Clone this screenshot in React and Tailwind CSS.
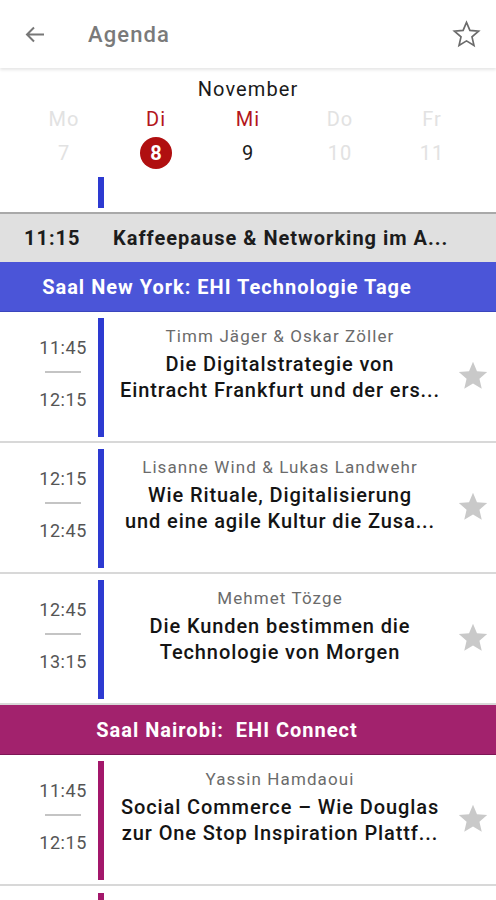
const BLUE_BAR = "bg-[#2d3ad1]";
const PURPLE_BAR = "bg-[#a3176b]";

const sessions = [
  {
    from: "11:45",
    to: "12:15",
    speaker: "Timm Jäger & Oskar Zöller",
    lines: ["Die Digitalstrategie von", "Eintracht Frankfurt und der ers..."],
    bar: BLUE_BAR,
  },
  {
    from: "12:15",
    to: "12:45",
    speaker: "Lisanne Wind & Lukas Landwehr",
    lines: ["Wie Rituale, Digitalisierung", "und eine agile Kultur die Zusa..."],
    bar: BLUE_BAR,
  },
  {
    from: "12:45",
    to: "13:15",
    speaker: "Mehmet Tözge",
    lines: ["Die Kunden bestimmen die", "Technologie von Morgen"],
    bar: BLUE_BAR,
  },
];

const nairobi = [
  {
    from: "11:45",
    to: "12:15",
    speaker: "Yassin Hamdaoui",
    lines: ["Social Commerce – Wie Douglas", "zur One Stop Inspiration Plattf..."],
    bar: PURPLE_BAR,
  },
];

function StarOutline() {
  return (
    <svg width="29" height="29" viewBox="0 0 24 24">
      <path
        d="M12 17.27L18.18 21l-1.64-7.03L22 9.24l-7.19-.61L12 2 9.19 8.63 2 9.24l5.46 4.73L5.82 21z"
        fill="none"
        stroke="#6b6b6b"
        strokeWidth="1.4"
      />
    </svg>
  );
}

function StarFilled() {
  return (
    <svg width="34" height="34" viewBox="0 0 24 24">
      <path
        d="M12 17.27L18.18 21l-1.64-7.03L22 9.24l-7.19-.61L12 2 9.19 8.63 2 9.24l5.46 4.73L5.82 21z"
        fill="#c9c9c9"
      />
    </svg>
  );
}

function Header() {
  return (
    <header className="relative z-10 flex h-[68px] items-center bg-white shadow-[0_2px_3px_rgba(0,0,0,0.10)]">
      <div className="flex w-[88px] pl-[25px]">
        <svg width="20" height="17" viewBox="0 0 20 17">
          <path d="M19 8.5H2M9 1.5L2 8.5l7 7" fill="none" stroke="#777" strokeWidth="2" />
        </svg>
      </div>
      <div className="text-[22px] font-medium tracking-[1.1px] text-[#7a7a7a]">Agenda</div>
      <div className="ml-auto pr-[15px] pt-[1px]">
        <StarOutline />
      </div>
    </header>
  );
}

function Calendar() {
  const days = [
    { d: "Mo", n: "7", state: "off" },
    { d: "Di", n: "8", state: "sel" },
    { d: "Mi", n: "9", state: "on" },
    { d: "Do", n: "10", state: "off" },
    { d: "Fr", n: "11", state: "off" },
  ];
  return (
    <div className="bg-white pt-[8px]">
      <div className="flex h-[26px] items-center justify-center text-[20px] tracking-[1.1px] text-[#1a1a1a]">
        November
      </div>
      <div className="mt-[2px] grid grid-cols-5 px-[18px]">
        {days.map((x) => (
          <div
            key={x.d}
            className={
              "flex h-[30px] items-center justify-center text-[20px] tracking-[1px] " +
              (x.state === "off" ? "text-[#e2e2e2]" : "text-[#b3161c]")
            }
          >
            {x.d}
          </div>
        ))}
      </div>
      <div className="mt-[1px] grid grid-cols-5 px-[18px]">
        {days.map((x) => (
          <div key={x.n} className="flex h-[36px] items-center justify-center text-[20px] tracking-[1px]">
            {x.state === "sel" ? (
              <span className="flex h-[32px] w-[32px] items-center justify-center rounded-full bg-[#b00f10] font-bold tracking-normal text-white">
                {x.n}
              </span>
            ) : (
              <span className={x.state === "off" ? "text-[#e2e2e2]" : "text-[#1a1a1a]"}>{x.n}</span>
            )}
          </div>
        ))}
      </div>
    </div>
  );
}

function SessionRow({ s }) {
  return (
    <div className="flex h-[131px] border-b-2 border-[#d8d8d8] bg-white">
      <div className="flex w-[98px] justify-end pr-[11px] pt-[26px]">
        <div className="flex flex-col items-center text-[18px] leading-[20px] tracking-[0.6px] text-[#555]">
          <span>{s.from}</span>
          <span className="mt-[13px] h-[2px] w-[36px] bg-[#c4c4c4]" />
          <span className="mt-[17px]">{s.to}</span>
        </div>
      </div>
      <div className={"mb-[4px] mt-[6px] w-[6px] " + s.bar} />
      <div className="min-w-0 flex-1 px-[8px] pt-[13px] text-center">
        <div className="whitespace-nowrap text-[17px] leading-[22px] tracking-[1.1px] text-[#6b6b6b]">
          {s.speaker}
        </div>
        <div className="mt-[4px] text-[20px] font-medium leading-[26px] tracking-[0.9px] text-[#141414]">
          {s.lines.map((l) => (
            <div key={l} className="whitespace-nowrap">
              {l}
            </div>
          ))}
        </div>
      </div>
      <div className="flex w-[40px] items-center pb-[2px]">
        <StarFilled />
      </div>
    </div>
  );
}

function RoomHeader({ label, className }) {
  return (
    <div
      className={
        "flex h-[50px] items-center justify-center whitespace-pre pr-[42px] text-[20px] font-bold tracking-[1px] text-white " +
        className
      }
    >
      {label}
    </div>
  );
}

export default function App() {
  return (
    <div className="h-[900px] w-[496px] overflow-hidden bg-white font-['Roboto',sans-serif]">
      <Header />
      <Calendar />

      {/* list, scrolled a little */}
      <div className="flex h-[41px] bg-white">
        <div className="w-[98px]" />
        <div className={"mb-[4px] mt-[6px] w-[6px] " + BLUE_BAR} />
      </div>
      <div className="flex h-[50px] items-center border-t-2 border-[#a9a9a9] bg-[#e0e0e0] pl-[24px] text-[20px] font-bold tracking-[1px] text-[#1c1c1c]">
        <span className="w-[89px]">11:15</span>
        <span className="whitespace-nowrap">Kaffeepause &amp; Networking im A...</span>
      </div>
      <RoomHeader label="Saal New York: EHI Technologie Tage" className="border-b border-[#3b45bd] bg-[#4b55d8]" />
      {sessions.map((s) => (
        <SessionRow key={s.from} s={s} />
      ))}
      <RoomHeader label="Saal Nairobi:  EHI Connect" className="border-b border-[#7d1655] bg-[#a2226d]" />
      {nairobi.map((s) => (
        <SessionRow key={s.speaker} s={s} />
      ))}
      <div className="flex h-[20px] bg-white">
        <div className="w-[98px]" />
        <div className={"mt-[7px] w-[6px] " + PURPLE_BAR} />
      </div>
    </div>
  );
}
